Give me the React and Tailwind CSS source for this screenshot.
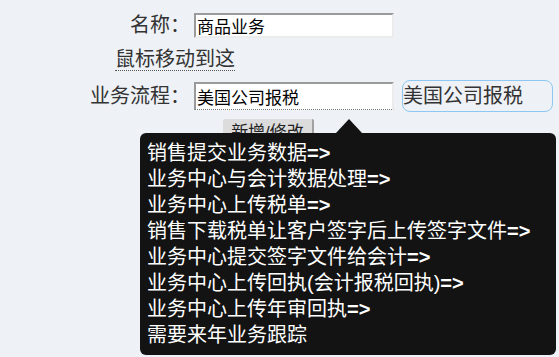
import React from "react";

const lines = [
  ["销售提交业务数据", "=>"],
  ["业务中心与会计数据处理", "=>"],
  ["业务中心上传税单", "=>"],
  ["销售下载税单让客户签字后上传签字文件", "=>"],
  ["业务中心提交签字文件给会计", "=>"],
  ["业务中心上传回执(会计报税回执)", "=>"],
  ["业务中心上传年审回执", "=>"],
  ["需要来年业务跟踪", ""],
];

const inputCls =
  "ml-[4px] w-[200px] border-2 border-[#ececec] border-t-[#9a9a9a] border-l-[#9a9a9a] bg-white px-[1px] text-[17px] text-black outline-none";

export default function App() {
  return (
    <div className="relative h-[357px] w-[559px] overflow-hidden bg-[#eef1f5] font-['Liberation_Sans','Noto_Sans_CJK_SC',sans-serif] text-[#333]">
      <div className="pt-[13px]">
        <div className="flex items-center">
          <label className="w-[190px] text-right text-[20px] leading-[25px]">名称：</label>
          <input readOnly value="商品业务" className={`${inputCls} h-[25px] leading-[21px]`} />
        </div>

        <div className="mt-[9px] pl-[115px]">
          <span className="border-b border-dotted border-[#555] text-[20px] leading-[25px]">
            鼠标移动到这
          </span>
        </div>

        <div className="mt-[7px] flex items-center">
          <label className="w-[190px] text-right text-[20px] leading-[25px]">业务流程：</label>
          <input
            readOnly
            value="美国公司报税"
            className={`${inputCls} h-[28px] border-b-[#777] border-b-dotted leading-[22px]`}
            style={{ borderBottomStyle: "dotted", borderBottomWidth: 1 }}
          />
          <div className="ml-[8px] h-[32px] w-[151px] rounded-[8px] border border-[#8cc8f2] text-[20px] leading-[30px]">
            美国公司报税
          </div>
        </div>

        <div className="mt-[7px] pl-[223px]">
          <button className="h-[28px] w-[91px] rounded-[2px] border-r-2 border-[#a0a0a0] bg-[#dcdcdc] text-[17px] text-[#222]">
            新增/修改
          </button>
        </div>
      </div>

      <div className="absolute left-[140px] top-[133px] h-[222px] w-[416px] rounded-[6px] bg-[#131313] px-[7px] pt-[7px] text-[20px] leading-[26px] text-white">
        <div className="absolute -top-[14px] left-[196px] h-0 w-0 border-x-[13px] border-b-[14px] border-x-transparent border-b-[#131313]" />
        {lines.map(([t, arrow], i) => (
          <div key={i} className="whitespace-nowrap">
            {t}
            {arrow && <span className="font-bold">{arrow}</span>}
          </div>
        ))}
      </div>
    </div>
  );
}
